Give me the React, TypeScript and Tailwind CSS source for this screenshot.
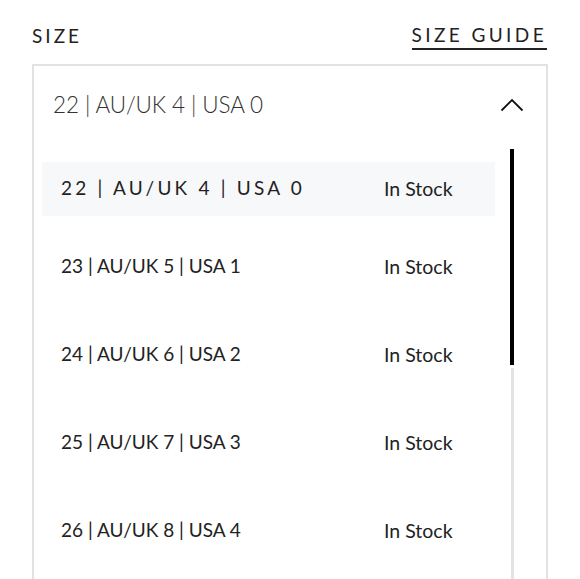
const sizes = [
  '22 | AU/UK 4 | USA 0',
  '23 | AU/UK 5 | USA 1',
  '24 | AU/UK 6 | USA 2',
  '25 | AU/UK 7 | USA 3',
  '26 | AU/UK 8 | USA 4',
];

export default function App() {
  return (
    <div className="h-[579px] w-[580px] overflow-hidden bg-white px-[32px] pt-[22px] font-['Lato',sans-serif] text-[#222]">
      {/* Label row */}
      <div className="flex items-center justify-between pr-[1px]">
        <span className="text-[19px] tracking-[3px]">SIZE</span>
        <span className="border-b-2 border-[#222] pb-[1px] text-[19px] leading-[24px] tracking-[3.4px]">SIZE GUIDE</span>
      </div>

      {/* Dropdown */}
      <div className="mt-[13px] h-[600px] border-2 border-b-0 border-[#e2e2e2]">
        <div className="flex h-[78px] items-center justify-between pl-[19px] pr-[22px]">
          <span className="text-[22.5px] font-light tracking-[-0.1px] text-[#333]">{sizes[0]}</span>
          <svg width="24" height="14" viewBox="0 0 24 14" fill="none">
            <polyline points="1.5,12.5 12,2 22.5,12.5" stroke="#111" strokeWidth="1.8" />
          </svg>
        </div>

        <div className="flex">
          <div className="flex-1 pl-[8px] pt-[18px]">
            {sizes.map((s, i) =>
              i === 0 ? (
                <div key={s} className="mb-[7px] flex h-[54px] items-center bg-[#f7f8f9] pl-[19px]">
                  <span className="w-[323px] text-[19px] tracking-[3.2px]">{s}</span>
                  <span className="text-[19.5px]">In Stock</span>
                </div>
              ) : (
                <div key={s} className="flex h-[88px] items-center pl-[19px]">
                  <span className="w-[323px] text-[19px]">{s}</span>
                  <span className="text-[19.5px]">In Stock</span>
                </div>
              )
            )}
          </div>
          <div className="ml-[15px] mr-[32px] mt-[5px] flex w-[4px] flex-col items-center">
            <div className="h-[216px] w-[4px] bg-black" />
            <div className="mt-[3px] h-[300px] w-[3px] bg-[#e3e3e3]" />
          </div>
        </div>
      </div>
    </div>
  );
}
